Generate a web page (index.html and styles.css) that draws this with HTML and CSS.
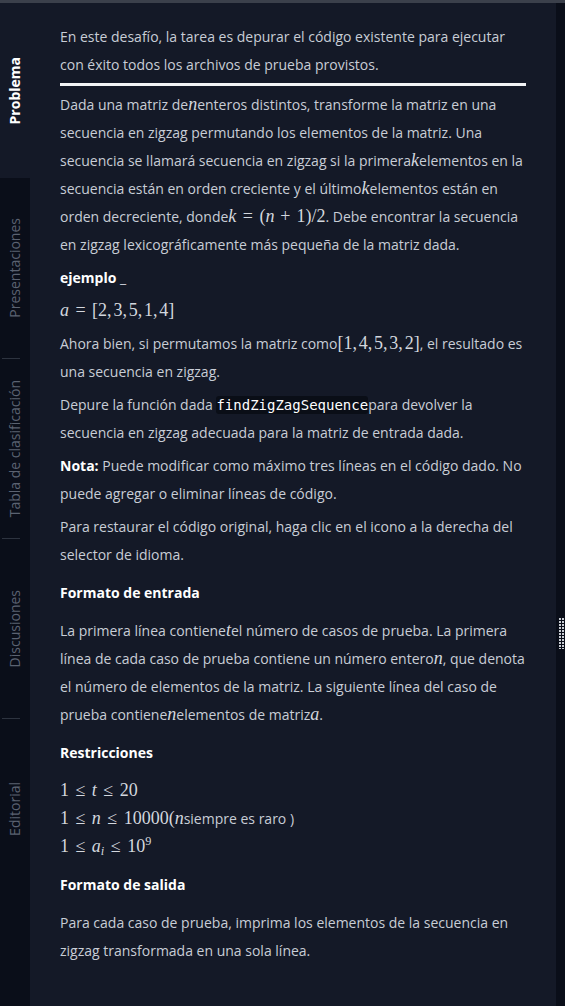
FILE: index.html
```html
<!DOCTYPE html>
<html lang="es">
<head>
<meta charset="utf-8">
<title>Problema</title>
<link rel="stylesheet" href="styles.css">
</head>
<body>
<div class="topbar"></div>
<div class="layout">
  <nav class="sidebar">
    <div class="tab active"><span class="tab-label">Problema</span></div>
    <div class="tab"><span class="tab-label">Presentaciones</span></div>
    <div class="sep"></div>
    <div class="tab short"><span class="tab-label">Tabla de clasificación</span></div>
    <div class="sep"></div>
    <div class="tab short"><span class="tab-label">Discusiones</span></div>
    <div class="sep"></div>
    <div class="tab short"><span class="tab-label">Editorial</span></div>
  </nav>
  <main class="content">
    <p class="intro">En este desafío, la tarea es depurar el código existente para ejecutar con éxito todos los archivos de prueba provistos.</p>
    <div class="rule"></div>
    <p>Dada una matriz de<span class="m"><i>n</i></span>enteros distintos, transforme la matriz en una secuencia en zigzag permutando los elementos de la matriz. Una secuencia se llamará secuencia en zigzag si la primera<span class="m"><i>k</i></span>elementos en la secuencia están en orden creciente y el último<span class="m"><i>k</i></span>elementos están en orden decreciente, donde<span class="m"><i>k</i><span class="rel">=</span>(<i>n</i><span class="bin">+</span>1)/2</span>. Debe encontrar la secuencia en zigzag lexicográficamente más pequeña de la matriz dada.</p>
    <p><strong>ejemplo</strong> _</p>
    <p><span class="m"><i>a</i><span class="rel">=</span>[2<span class="cm">,</span>3<span class="cm">,</span>5<span class="cm">,</span>1<span class="cm">,</span>4]</span></p>
    <p>Ahora bien, si permutamos la matriz como<span class="m">[1<span class="cm">,</span>4<span class="cm">,</span>5<span class="cm">,</span>3<span class="cm">,</span>2]</span>, el resultado es una secuencia en zigzag.</p>
    <p>Depure la función dada <code class="code">findZigZagSequence</code>para devolver la secuencia en zigzag adecuada para la matriz de entrada dada.</p>
    <p><strong>Nota:</strong> Puede modificar como máximo tres líneas en el código dado. No puede agregar o eliminar líneas de código.</p>
    <p>Para restaurar el código original, haga clic en el icono a la derecha del selector de idioma.</p>
    <h3 class="heading">Formato de entrada</h3>
    <p>La primera línea contiene<span class="m"><i>t</i></span>el número de casos de prueba. La primera línea de cada caso de prueba contiene un número entero<span class="m"><i>n</i></span>, que denota el número de elementos de la matriz. La siguiente línea del caso de prueba contiene<span class="m"><i>n</i></span>elementos de matriz<span class="m"><i>a</i></span>.</p>
    <h3 class="heading">Restricciones</h3>
    <div class="constraints">
      <div class="cline"><span class="m">1<span class="rel">≤</span><i>t</i><span class="rel">≤</span>20</span></div>
      <div class="cline"><span class="m">1<span class="rel">≤</span><i>n</i><span class="rel">≤</span>10000(<i>n</i></span>siempre es raro )</div>
      <div class="cline"><span class="m">1<span class="rel">≤</span><i>a</i><sub class="sub"><i>i</i></sub><span class="rel">≤</span>10<sup class="sup">9</sup></span></div>
    </div>
    <h3 class="heading">Formato de salida</h3>
    <p>Para cada caso de prueba, imprima los elementos de la secuencia en zigzag transformada en una sola línea.</p>
  </main>
  <aside class="strip">
    <svg class="handle" width="6" height="31" viewBox="0 0 6 31" aria-hidden="true">
      <defs>
        <pattern id="dots" width="3" height="3" patternUnits="userSpaceOnUse">
          <rect x="0" y="0" width="2" height="2" fill="#c9cdd4"/>
        </pattern>
      </defs>
      <rect x="0" y="0" width="6" height="31" fill="url(#dots)"/>
    </svg>
  </aside>
</div>
</body>
</html>
```
FILE: styles.css
```css
html, body {
  margin: 0;
  padding: 0;
}
body {
  background: #141927;
  font-family: "Open Sans", "Noto Sans", sans-serif;
  height: 1006px;
  overflow: hidden;
}
.topbar {
  height: 3px;
  background: #3b404b;
}
.layout {
  display: flex;
  height: 1003px;
}
.sidebar {
  width: 30px;
  flex: none;
  background: #0a0e19;
  display: flex;
  flex-direction: column;
}
.tab {
  height: 180px;
  display: flex;
  align-items: center;
  justify-content: center;
  flex: none;
}
.tab.short {
  height: 179px;
}
.tab.active {
  height: 175px;
  background: #141927;
}
.tab-label {
  writing-mode: vertical-rl;
  transform: rotate(180deg);
  font-size: 14px;
  line-height: 20px;
  color: #5b6271;
  white-space: nowrap;
}
.tab.active .tab-label {
  color: #ffffff;
  font-weight: 700;
}
.sep {
  height: 1px;
  width: 18px;
  margin-left: 2px;
  background: #2d333f;
  flex: none;
}
.content {
  flex: 1;
  min-width: 0;
  padding: 20px 30px 0;
  color: #c8cdd6;
  font-size: 14px;
  line-height: 28px;
}
.content p {
  margin: 0 0 5px;
}
.content p.intro {
  margin-bottom: 4px;
}
.rule {
  height: 3px;
  background: #f2f3f5;
  margin-bottom: 5px;
}
.content strong {
  color: #ffffff;
  font-weight: 700;
}
.heading {
  margin: 10px 0;
  font-size: 14px;
  line-height: 28px;
  font-weight: 700;
  color: #ffffff;
}
.m {
  font-family: "Liberation Serif", "Times New Roman", serif;
  font-size: 18px;
  line-height: 1;
  color: #d3d7de;
}
.m i {
  font-style: italic;
}
.rel {
  margin: 0 0.36em;
}
.bin {
  margin: 0 0.33em;
}
.cm {
  margin-right: 0.1em;
}
.sub {
  font-size: 0.7em;
  vertical-align: -0.25em;
  line-height: 0;
}
.sup {
  font-size: 0.68em;
  vertical-align: 0.55em;
  line-height: 0;
}
.code {
  font-family: "DejaVu Sans Mono", "Liberation Mono", monospace;
  font-size: 14px;
  color: #ffffff;
  background: #0a0e17;
  border-radius: 3px;
  padding: 1px 0;
}
.constraints {
  margin: 0;
}
.cline {
  line-height: 28px;
}
.strip {
  width: 9px;
  flex: none;
  background: #0a0e19;
}
.handle {
  display: block;
  margin: 615px 0 0 3px;
}
```
